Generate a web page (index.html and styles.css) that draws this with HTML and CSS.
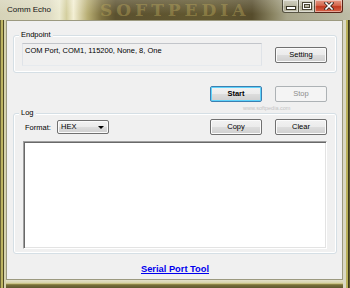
FILE: index.html
```html
<!DOCTYPE html>
<html lang="en">
    <head>
        <meta charset="UTF-8">
        <meta name="viewport" content="width=device-width, initial-scale=1.0">
        <title>Comm Echo</title>
        <link rel="stylesheet" href="styles.css">
    </head>
    <body>
        <div class="window">
            <div class="titlebar">
                <span class="title">Comm Echo</span>
                <span class="brand-mark">SOFTPEDIA</span>
                <div class="caption-buttons">
                    <span class="cap cap-min"><i></i></span>
                    <span class="cap cap-max"><i></i></span>
                    <span class="cap cap-close">
                        <svg width="10" height="8" viewBox="0 0 10 8">
                            <path d="M2 1 L8 7 M8 1 L2 7" stroke="#3a2a20" stroke-width="3.2" stroke-linecap="square"/>
                            <path d="M2 1 L8 7 M8 1 L2 7" stroke="#ffffff" stroke-width="1.6" stroke-linecap="square"/>
                        </svg>
                    </span>
                </div>
            </div>
            <div class="frame">
                <div class="client">
                    <div class="group endpoint">
                        <span class="group-title">Endpoint</span>
                        <div class="endpoint-row">
                            <div class="textbox">COM Port, COM1, 115200, None, 8, One</div>
                            <button class="btn">Setting</button>
                        </div>
                    </div>
                    <div class="run-row">
                        <button class="btn btn-default">Start</button>
                        <button class="btn" disabled>Stop</button>
                    </div>
                    <div class="group log">
                        <span class="group-title">Log</span>
                        <span class="site-mark">www.softpedia.com</span>
                        <div class="log-toolbar">
                            <label class="format-label">Format:</label>
                            <div class="combo">HEX<span class="combo-arrow"></span></div>
                            <button class="btn btn-copy">Copy</button>
                            <button class="btn">Clear</button>
                        </div>
                        <div class="log-view"></div>
                    </div>
                    <a class="tool-link" href="#">Serial Port Tool</a>
                </div>
            </div>
        </div>
    </body>
</html>
```

FILE: styles.css
```css
body{
    margin:0;
    background:#ffffff;
}
.window{
    width:350px;
    height:288px;
    display:flex;
    flex-direction:column;
    overflow:hidden;
    font-family:"Liberation Sans", Arial, sans-serif;
    font-size:7.5px;
    color:#000;
    background:#b8b48c;
}

/* title bar */
.titlebar{
    height:20px;
    flex:none;
    display:flex;
    align-items:flex-start;
    position:relative;
    background:
        linear-gradient(to bottom, rgba(255,255,255,0.18), rgba(255,255,255,0) 70%),
        linear-gradient(to right, #d6d3b8 0, #dfdcc3 14%, #ecead0 17%, #d4cf9f 19%, #f3efd4 21%, #b8ae74 25%, #7c7040 29%, #5b512f 33%, #625830 60%, #564c2c 72%, #8a8462 78%, #a8a58a 82%, #bdbca6 100%);
}
.title{
    padding:5px 0 0 7px;
    font-size:8px;
    line-height:10px;
    color:#111;
    position:relative;
    z-index:1;
}
.brand-mark{
    position:absolute;
    left:100px;
    top:0;
    font-family:"DejaVu Serif", serif;
    font-weight:bold;
    font-size:17px;
    line-height:20px;
    letter-spacing:4px;
    color:rgba(196,176,96,0.4);
}
.caption-buttons{
    margin-left:auto;
    margin-right:7px;
    display:flex;
    position:relative;
}
.cap{
    height:13px;
    box-sizing:border-box;
    display:flex;
    align-items:center;
    justify-content:center;
    border:1px solid rgba(40,36,20,0.7);
    border-top:none;
    box-shadow:inset 0 0 0 1px rgba(255,255,255,0.45);
    background:linear-gradient(to bottom, rgba(255,255,255,0.35), rgba(255,255,255,0.12) 50%, rgba(0,0,0,0.05) 50%, rgba(255,255,255,0.25));
}
.cap-min{
    width:17px;
    border-bottom-left-radius:3px;
}
.cap-max{
    width:16px;
    border-left:none;
}
.cap-close{
    width:28px;
    border-left:none;
    border-color:#5a2216;
    border-bottom-right-radius:3px;
    background:linear-gradient(to bottom, #e49a86, #d5684e 45%, #c13a20 55%, #d8664a);
}
.cap-min i{
    width:8px;
    height:2px;
    margin-top:4px;
    background:#fff;
    border:1px solid #3a3628;
}
.cap-max i{
    width:6px;
    height:4px;
    border:1px solid #fff;
    box-shadow:0 0 0 1px #4a4634, inset 0 0 0 1px #4a4634;
}

/* frame around the client area */
.frame{
    flex:1;
    display:flex;
    padding:0 7px 8px 6px;
    background:
        linear-gradient(to right, #6a6336 0, #6a6336 1px, #bdb462 1px, #bdb462 3px, #4e4824 3px, #4e4824 4px, #d6d3ae 4px) left top / 6px 100% no-repeat,
        linear-gradient(to left, #5e5830 0, #5e5830 1px, #3e3a1c 1px, #3e3a1c 2px, #bab15a 2px, #bab15a 4px, #dad8c4 4px) right top / 7px 100% no-repeat,
        linear-gradient(to bottom, #e2e0ca 0, #d6d2a8 3px, #bcb466 4px, #5a5226 5px, #8a8248 6px, #4a4420 7px, #7a7240 8px) left bottom / 100% 8px no-repeat,
        #c4c09c;
}
.client{
    flex:1;
    display:flex;
    flex-direction:column;
    border:1px solid #9c9a80;
    padding:0 5px 0 6px;
    background:#f0f0f0;
}

/* group boxes */
.group{
    position:relative;
    border:1px solid #d5dfe5;
    border-radius:3px;
    box-shadow:inset 0 0 0 1px #ffffff;
}
.group-title{
    position:absolute;
    left:5px;
    top:-6px;
    padding:0 2px;
    line-height:10px;
    background:#f0f0f0;
}
.endpoint{
    margin-top:14px;
    padding:7px 9px 6px 8px;
}
.endpoint-row{
    display:flex;
    align-items:center;
    justify-content:space-between;
}
.textbox{
    width:240px;
    height:23px;
    box-sizing:border-box;
    padding:2px 2px;
    line-height:10px;
    border:1px solid;
    border-color:#c2c5ca #dfe3e8 #e6eaee #dfe3e8;
    background:#f0f0f0;
}

/* buttons */
.btn{
    width:52px;
    height:16px;
    box-sizing:border-box;
    padding:0;
    font:inherit;
    line-height:14px;
    color:#000;
    border:1px solid #707070;
    border-radius:2px;
    background:linear-gradient(to bottom, #f2f2f2 0, #ebebeb 50%, #dddddd 50%, #cfcfcf 100%);
    box-shadow:inset 0 0 0 1px #fbfbfb;
}
.btn-default{
    border-color:#3c7fb1;
    box-shadow:inset 0 0 0 1px #5fd3fb;
    font-weight:bold;
}
.btn:disabled{
    color:#8d8d8d;
    border-color:#adb2b5;
    background:#f4f4f4;
    box-shadow:none;
}
.run-row{
    display:flex;
    justify-content:flex-end;
    gap:13px;
    margin:13px 10px 0 0;
}

/* log box */
.log{
    margin-top:11px;
    padding:5px 9px 4px 9px;
}
.site-mark{
    position:absolute;
    left:229px;
    top:-9px;
    font-size:5.5px;
    color:#c4c4c4;
}
.log-toolbar{
    display:flex;
    align-items:center;
    height:16px;
}
.format-label{
    margin-left:2px;
    width:32px;
}
.combo{
    position:relative;
    width:52px;
    height:14px;
    box-sizing:border-box;
    padding-left:3px;
    line-height:12px;
    border:1px solid #707070;
    border-radius:2px;
    background:linear-gradient(to bottom, #f2f2f2 0, #ebebeb 50%, #dddddd 50%, #cfcfcf 100%);
    box-shadow:inset 0 0 0 1px #fbfbfb;
}
.combo-arrow{
    position:absolute;
    right:4px;
    top:5px;
    border-left:3px solid transparent;
    border-right:3px solid transparent;
    border-top:3px solid #000;
}
.btn-copy{
    margin-left:auto;
    margin-right:13px;
}
.log-view{
    margin-top:6px;
    height:108px;
    box-sizing:border-box;
    border:1px solid;
    border-color:#a0a0a0 #ffffff #ffffff #a0a0a0;
    box-shadow:inset 1px 1px 0 #696969, inset -1px -1px 0 #e3e3e3;
    background:#ffffff;
}
.tool-link{
    align-self:center;
    margin-top:9px;
    font-size:9.3px;
    font-weight:bold;
    line-height:12px;
    color:#0000ee;
}
```
